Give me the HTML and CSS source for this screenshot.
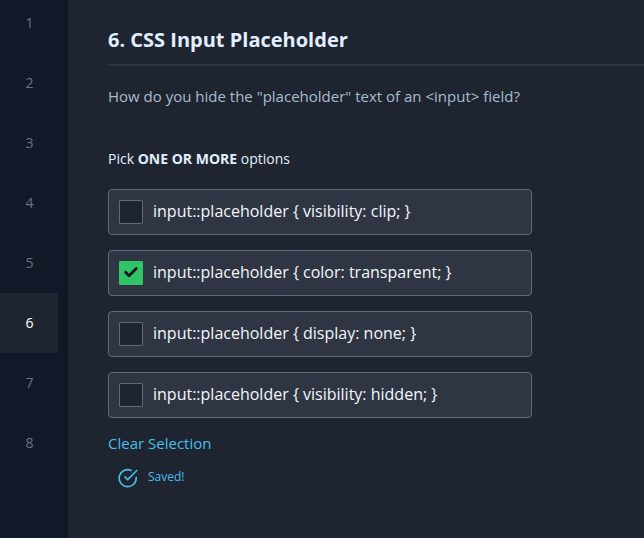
FILE: index.html
```html
<!DOCTYPE html>
<html lang="en">
<head>
<meta charset="utf-8">
<title>CSS Input Placeholder</title>
<link rel="stylesheet" href="styles.css">
</head>
<body>
<nav class="sidebar">
<a class="step">1</a><a class="step">2</a><a class="step">3</a><a class="step">4</a><a class="step">5</a><a class="step active">6</a><a class="step">7</a><a class="step">8</a>
</nav>
<main class="content">
<h1 class="title">6. CSS Input Placeholder</h1>
<p class="question">How do you hide the "placeholder" text of an &lt;input&gt; field?</p>
<p class="hint">Pick <b>ONE OR MORE</b> options</p>
<div class="options">
<div class="option"><span class="box"></span><span class="label">input::placeholder { visibility: clip; }</span></div>
<div class="option"><span class="box checked"><svg width="24" height="24" viewBox="0 0 24 24"><path d="M6.6 11.2l3.4 3.5 7.3-7.2" fill="none" stroke="#0d1422" stroke-width="2.8" stroke-linecap="round" stroke-linejoin="round"/></svg></span><span class="label">input::placeholder { color: transparent; }</span></div>
<div class="option"><span class="box"></span><span class="label">input::placeholder { display: none; }</span></div>
<div class="option"><span class="box"></span><span class="label">input::placeholder { visibility: hidden; }</span></div>
</div>
<a class="clear">Clear Selection</a>
<div class="saved"><svg width="20" height="20" viewBox="0 0 20 20" fill="none" stroke="#48bfe8" stroke-width="1.6" stroke-linecap="round" stroke-linejoin="round"><path d="M18.2 9.2v.8A8.5 8.5 0 1 1 13.2 2.4M7 8.9l2.7 2.7L18.8 2.5"/></svg><span class="status">Saved!</span></div>
</main>
</body>
</html>
```
FILE: styles.css
```css
* { box-sizing: border-box; }
body { margin: 0; height: 538px; overflow: hidden; display: flex; background: #1e2531; font-family: "Open Sans", "Noto Sans", sans-serif; color: #f3f7fc; }
.sidebar { width: 68px; flex: none; background: #111827; display: flex; flex-direction: column; padding-right: 9px; margin-top: -7px; }
.step { height: 60px; flex: none; line-height: 60px; text-align: center; font-size: 14px; color: #6b7280; }
.active { background: #1e2531; color: #fff; margin-right: 1px; padding-left: 1px; }
.content { flex: 1; padding-left: 40px; }
.title { margin: 0; padding-top: 26px; height: 66px; border-bottom: 2px solid #2f3542; font-size: 20px; line-height: 28px; color: #e1effe; }
.question { margin: 18px 0 0; font-size: 15px; line-height: 24px; color: #a9bccd; }
.hint { margin: 39px 0 0; font-size: 14px; line-height: 24px; color: #e1effe; }
.options { width: 424px; display: grid; gap: 15px; margin-top: 18px; }
.option { height: 46px; display: flex; align-items: center; padding-left: 10px; gap: 10px; border: 1px solid #626975; border-radius: 4px; background: #2f3542; font-size: 16px; }
.label { padding-bottom: 2px; }
.box { width: 24px; height: 24px; border: 1px solid #626975; border-radius: 1px; background: #1e2531; }
.checked { background: #31c466; border: 0; }
.checked svg { display: block; }
.clear { display: block; margin-top: 13px; font-size: 15px; line-height: 24px; color: #48bfe8; }
.saved { display: flex; align-items: center; gap: 10px; margin: 13px 0 0 10px; font-size: 12px; color: #48bfe8; }
.status { padding-bottom: 3px; }
```
